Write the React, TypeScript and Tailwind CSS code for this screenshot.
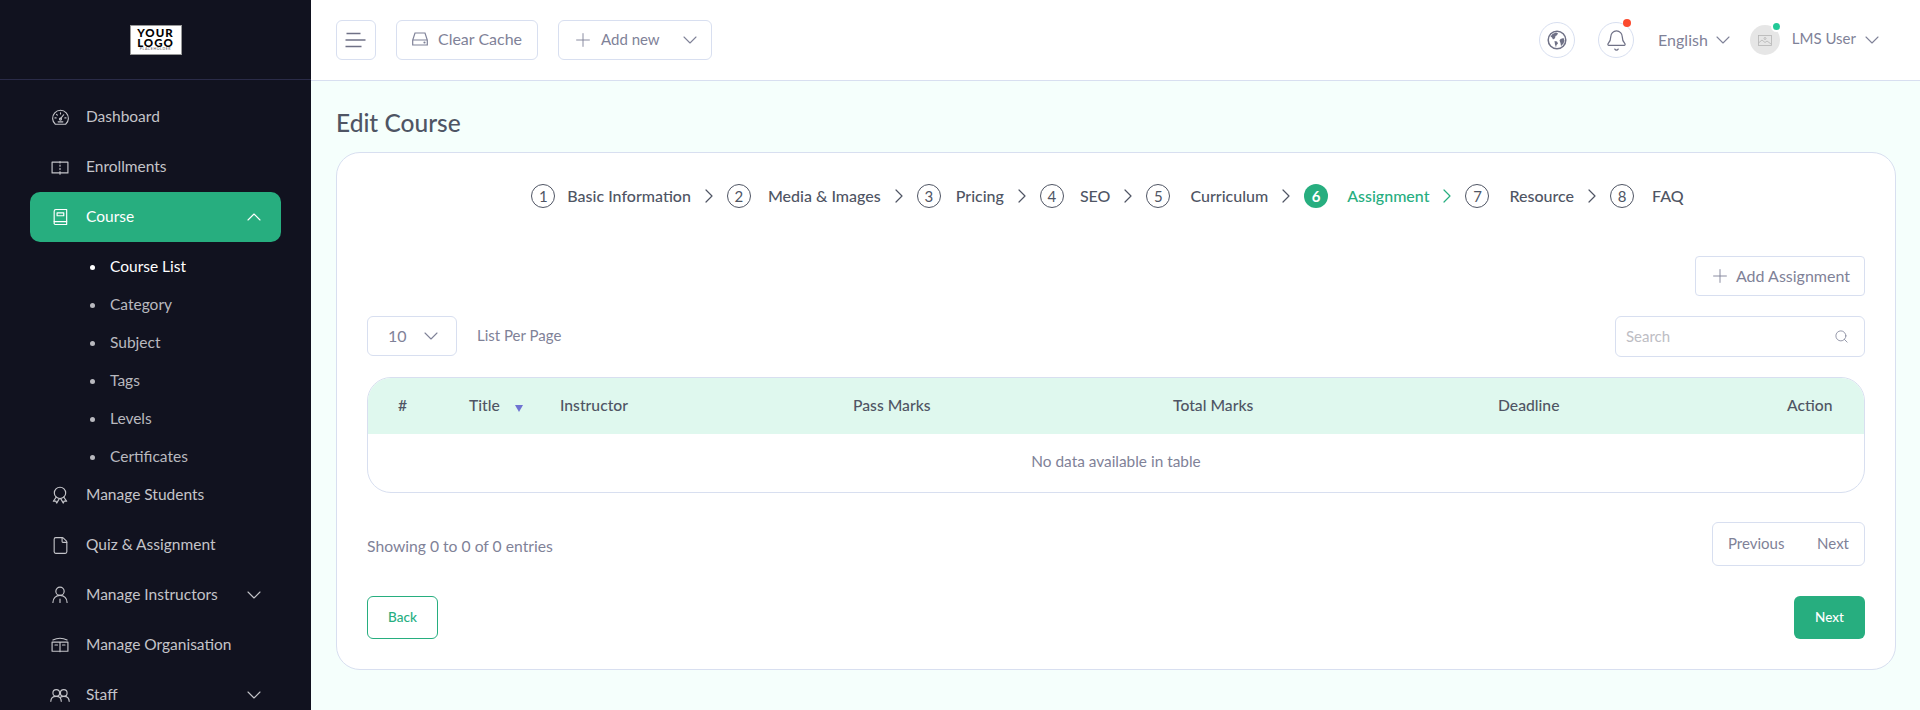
import { Plus, Search, Bell, File } from "lucide-react";

const ico = { width: 20, height: 20, viewBox: "0 0 24 24", fill: "none", stroke: "currentColor", strokeWidth: 1.4, strokeLinecap: "round" as const, strokeLinejoin: "round" as const };

const Chev = ({ up, box = 18, className = "" }: { up?: boolean; box?: number; className?: string }) => (
  <span className={`flex shrink-0 items-center justify-center ${box === 20 ? "h-[20px] w-[20px]" : "h-[18px] w-[18px]"} ${className}`}>
    <svg width="14" height="8" viewBox="0 0 14 8" fill="none" stroke="currentColor" strokeWidth="1.100" strokeLinecap="round" strokeLinejoin="round">
      <path d={up ? "M1 7l6-6 6 6" : "M1 1l6 6 6-6"} />
    </svg>
  </span>
);

const GaugeIcon = () => (
  <svg {...ico} width={19} height={19}><path d="M5.500 20.500A10 10 0 1 1 18.500 20.500z" /><path d="M12 13.500l4-5" /><circle cx="12" cy="14" r="1.300" /><path d="M5 12.500h1.500M12 6v1.500M7 8l1 1M19 12.500h-1.500M9 17.500h6" /></svg>
);
const OpenBook = () => (
  <svg {...ico} width={21} height={21}><path d="M12 5.500H2.500v13H12M12 5.500h9.500v13H12" /><path d="M12 5v1.500M12 9v1.500M12 13v1.500M12 17v3" /></svg>
);
const BookIcon = () => (
  <svg {...ico}><path d="M5 20V5a2 2 0 0 1 2-2h13v18H7a2 2 0 0 1-2-1z" /><path d="M5 17.500h15M8.500 7h8v3.500h-8z" /></svg>
);
const Ribbon = () => (
  <svg {...ico}><circle cx="12" cy="9.500" r="6.800" /><path d="M7.500 14.500 4 19.500l3-.3 1 2.500 3-5M16.500 14.500l3.500 5-3-.3-1 2.500-3-5" /></svg>
);
const Person = () => (
  <svg {...ico}><circle cx="12" cy="7.500" r="5" /><path d="M3.500 21c0-5 3.500-8.500 8.500-8.500s8.500 3.500 8.500 8.500M12 17v4" /></svg>
);
const Library = () => (
  <svg {...ico} width={22} height={22}><path d="M2.500 8.500h19v11h-19zM12 9v11M6 12h3M15 12h3" /><path d="M3.500 6c5-2.500 12-2.500 17 0" /></svg>
);
const People = () => (
  <svg {...ico} width={23} height={23}><circle cx="7.500" cy="9" r="4" /><circle cx="16.500" cy="9" r="4" /><path d="M1 19c0-3.500 2.500-6 6.500-6s6 2.500 6 6M12.500 14c1-.7 2.400-1 4-1 4 0 6.500 2.500 6.500 6" /></svg>
);
const Globe = () => (
  <svg width="20" height="20" viewBox="0 0 20 20" fill="none">
    <circle cx="10" cy="10" r="8.800" stroke="#6f7186" strokeWidth="1.500" />
    <path d="M3.500 6.500 5.500 4 9 2.500l2 .8-1 2-1.500.7-.5 2.300-2 1.200L5 7.500z" fill="#6f7186" />
    <path d="M7.500 11l2.500.5 1 2-1.500 1.500-.5 2.500-1-3z" fill="#6f7186" />
    <path d="M13.500 9l3-1 1 2.500-1 3-2.500 2.500-.5-3-1-2.500z" fill="#6f7186" />
  </svg>
);

const Item = ({ icon, label, active, chev }: { icon: React.ReactNode; label: string; active?: boolean; chev?: "up" | "down" }) => (
  <div className={`flex h-[50px] items-center rounded-[10px] pl-5 pr-[17px] ${active ? "bg-[#27ae7f] text-white" : "text-[#c4c4c9]"}`}>
    <span className="flex w-[20px] justify-center">{icon}</span>
    <span className="ml-4 flex-1 text-[15.5px]">{label}</span>
    {chev && <Chev up={chev === "up"} box={20} />}
  </div>
);

const Sub = ({ label, active }: { label: string; active?: boolean }) => (
  <div className={`flex h-[38px] items-center pl-[60px] text-[15.5px] ${active ? "text-white" : "text-[#b9b9bf]"}`}>
    <span className={`mr-[15px] h-[5px] w-[5px] rounded-full ${active ? "bg-white" : "bg-[#b9b9bf]"}`} />
    {label}
  </div>
);

const Sidebar = () => (
  <aside className="h-[710px] w-[311px] shrink-0 overflow-hidden bg-[#11121f]">
    <div className="flex h-[80px] items-center justify-center border-b border-[#2a2b48]">
      <div className="flex h-[30px] w-[52px] flex-col items-center justify-center border border-[#999] bg-white leading-none text-black">
        <span className="text-[11.5px] font-black leading-[9.5px] tracking-[1px]">YOUR</span>
        <span className="text-[11.5px] font-black leading-[9.5px] tracking-[1px]">LOGO</span>
        <span className="mt-[1px] text-[3.5px] leading-[3px] tracking-[0.6px] text-[#555]">PLACEHOLDER</span>
      </div>
    </div>
    <nav className="px-[30px] pt-[12px]">
      <Item icon={<GaugeIcon />} label="Dashboard" />
      <Item icon={<OpenBook />} label="Enrollments" />
      <Item icon={<BookIcon />} label="Course" active chev="up" />
      <div className="py-[6px]">
        <Sub label="Course List" active />
        <Sub label="Category" />
        <Sub label="Subject" />
        <Sub label="Tags" />
        <Sub label="Levels" />
        <Sub label="Certificates" />
      </div>
      <div className="-mt-[12px]">
        <Item icon={<Ribbon />} label="Manage Students" />
        <Item icon={<File size={19} strokeWidth={1.400} />} label="Quiz & Assignment" />
        <Item icon={<Person />} label="Manage Instructors" chev="down" />
        <Item icon={<Library />} label="Manage Organisation" />
        <Item icon={<People />} label="Staff" chev="down" />
      </div>
    </nav>
  </aside>
);

const Header = () => (
  <header className="flex h-[81px] shrink-0 items-center border-b border-[#d8dff0] bg-white pl-[25px] pr-[39px] text-[#7f8298]">
    <div className="flex h-[40px] w-[40px] items-center justify-center rounded-[6px] border border-[#d8dff0]">
      <svg width="22" height="16" viewBox="0 0 22 16" fill="none" stroke="#6f7186" strokeWidth="1.600"><path d="M1.500 1.500h14M0.500 8h20M0.500 14.500h16" /></svg>
    </div>
    <div className="ml-[20px] flex h-[40px] w-[142px] items-center justify-center gap-[10px] rounded-[6px] border border-[#d8dff0] pb-[2px] text-[16px]">
      <svg width="16" height="14" viewBox="0 0 16 14" fill="none" stroke="#7f8298" strokeWidth="1.200"><path d="M3 1h10l2.300 7v5H.7V8zM.7 8h14.600" /><circle cx="12.500" cy="10.500" r=".5" /></svg>
      Clear Cache
    </div>
    <div className="ml-[20px] flex h-[40px] w-[154px] items-center rounded-[6px] border border-[#d8dff0] pb-[1px] pl-[16px] text-[15px]">
      <span className="flex h-[16px] w-[16px] items-center justify-center"><Plus size={22} strokeWidth={1} className="shrink-0" /></span>
      <span className="ml-[10px]">Add new</span>
      <Chev className="ml-[21px]" />
    </div>
    <div className="ml-auto flex items-center">
      <div className="flex h-[36px] w-[36px] items-center justify-center rounded-full border border-[#d8dff0]">
        <Globe />
      </div>
      <div className="relative ml-[23px] flex h-[36px] w-[36px] items-center justify-center rounded-full border border-[#d8dff0] text-[#6f7186]">
        <Bell size={23} strokeWidth={1.300} />
        <span className="absolute -top-[4px] right-[2px] h-[8px] w-[8px] rounded-full bg-[#fb4a2e]" />
      </div>
      <span className="-mt-[1px] ml-[24px] text-[16px]">English</span>
      <Chev className="ml-[6px]" />
      <div className="relative ml-[18px] flex h-[30px] w-[30px] items-center justify-center rounded-full bg-[#e6e6e6]">
        <svg width="14" height="11" viewBox="0 0 14 11" fill="none" stroke="#b5b5b5" strokeWidth="0.800"><rect x=".5" y=".5" width="13" height="10" /><path d="M.5 8l3.500-3 3 2.500 2-1.500 4 3" /><circle cx="7" cy="3.500" r="1" /></svg>
        <span className="absolute -right-[2px] -top-[4px] box-content h-[7px] w-[7px] rounded-full border-2 border-white bg-[#22c997]" />
      </div>
      <span className="-mt-[3px] ml-[12px] text-[15px]">LMS User</span>
      <Chev className="ml-[7px]" />
    </div>
  </header>
);

const steps = ["Basic Information", "Media & Images", "Pricing", "SEO", "Curriculum", "Assignment", "Resource", "FAQ"];
const gaps = ["ml-[12px]", "ml-[17px]", "ml-[15px]", "ml-[16px]", "ml-[20px]", "ml-[19px]", "ml-[20px]", "ml-[18px]"];

const Stepper = () => (
  <div className="flex h-[24px] items-center justify-center pr-[17px]">
    {steps.map((s, i) => {
      const on = i === 5;
      return (
        <div key={s} className="flex items-center">
          <span className={`flex h-[24px] w-[24px] items-center justify-center rounded-full text-[15px] ${on ? "bg-[#27ae7f] font-bold text-white" : "border border-[#4f5564] text-[#4f5564]"}`}>{i + 1}</span>
          <span className={`${gaps[i]} text-[16px] font-medium ${on ? "text-[#27ae7f]" : "text-[#4f5564]"}`}>{s}</span>
          {i < 7 && (
            <svg width="8" height="14" viewBox="0 0 8 14" fill="none" stroke="currentColor" strokeWidth="1.200" strokeLinecap="round" strokeLinejoin="round" className={`mx-[14px] ${on ? "text-[#27ae7f]" : "text-[#4f5564]"}`}>
              <path d="M1 1l6 6-6 6" />
            </svg>
          )}
        </div>
      );
    })}
  </div>
);

const cols = "grid grid-cols-[101px_91px_293px_320px_325px_289px_1fr]";

const Table = () => (
  <div className="mt-[20px] overflow-hidden rounded-[24px] border border-[#d8dff0]">
    <div className={`${cols} h-[56px] items-center bg-[#dff8ee] pb-[1px] text-[15.7px] font-medium text-[#4f5564]`}>
      <span className="pl-[30px]">#</span>
      <span className="flex items-center">Title<span className="ml-[15px] mt-[6px] h-0 w-0 border-x-[4px] border-t-[7px] border-x-transparent border-t-[#6f73d2]" /></span>
      <span>Instructor</span>
      <span>Pass Marks</span>
      <span>Total Marks</span>
      <span>Deadline</span>
      <span>Action</span>
    </div>
    <div className="flex h-[58px] items-center justify-center pb-[2px] text-[15.4px] text-[#7f8298]">No data available in table</div>
  </div>
);

export default function App() {
  return (
    <div className="flex h-[710px] w-[1920px] overflow-hidden bg-[#f5fffc] [font-family:Lato,sans-serif]">
      <Sidebar />
      <main className="flex min-w-0 flex-1 flex-col">
        <Header />
        <div className="pl-[25px] pr-[24px]">
          <h1 className="mt-[27px] h-[30px] text-[24.5px] font-medium leading-[30px] text-[#4f5564]">Edit Course</h1>
          <section className="mt-[14px] h-[518px] rounded-[24px] border border-[#d8dff0] bg-white px-[30px] pt-[31px]">
            <Stepper />
            <div className="mt-[48px] flex justify-end">
              <div className="flex h-[40px] w-[170px] items-center justify-center gap-[8px] rounded-[4px] border border-[#d8dff0] pl-[2px] text-[16px] text-[#7f8298]">
                <span className="flex h-[16px] w-[16px] items-center justify-center"><Plus size={22} strokeWidth={1} className="shrink-0" /></span>Add Assignment
              </div>
            </div>
            <div className="mt-[20px] flex items-start justify-between">
              <div className="flex items-center">
                <div className="flex h-[40px] w-[90px] items-center justify-between rounded-[6px] border border-[#d8dff0] pl-[20px] pr-[16px] text-[16px] text-[#7f8298]">
                  10<Chev />
                </div>
                <span className="-mt-[2px] ml-[20px] text-[15px] text-[#7f8298]">List Per Page</span>
              </div>
              <div className="flex h-[41px] w-[250px] items-center justify-between rounded-[6px] border border-[#d8dff0] pl-[10px] pr-[15px] text-[15px] text-[#bdbdc4]">
                Search<Search size={15} strokeWidth={1.300} className="text-[#7f8298]" />
              </div>
            </div>
            <Table />
            <div className="mt-[29px] flex items-center justify-between">
              <span className="mt-[6px] text-[15.7px] text-[#7f8298]">Showing 0 to 0 of 0 entries</span>
              <div className="flex h-[44px] w-[153px] items-center justify-between rounded-[6px] border border-[#d8dff0] px-[15px] pb-[1px] text-[15px] text-[#7f8298]">
                <span>Previous</span><span>Next</span>
              </div>
            </div>
            <div className="mt-[30px] flex items-center justify-between">
              <div className="flex h-[43px] w-[71px] items-center justify-center rounded-[6px] border border-[#27ae7f] text-[13.5px] font-medium text-[#27ae7f]">Back</div>
              <div className="flex h-[43px] w-[71px] items-center justify-center rounded-[6px] bg-[#27ae7f] text-[13.5px] font-medium text-white">Next</div>
            </div>
          </section>
        </div>
      </main>
    </div>
  );
}
